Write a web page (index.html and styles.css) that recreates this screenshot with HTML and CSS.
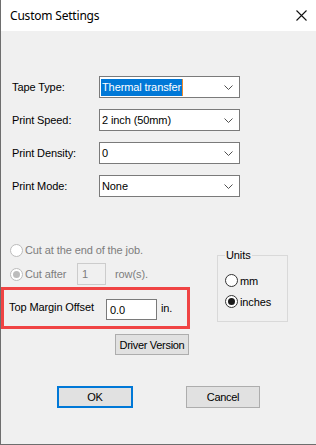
FILE: index.html
```html
<!DOCTYPE html>
<html lang="en">
<head>
    <meta charset="UTF-8">
    <meta name="viewport" content="width=device-width, initial-scale=1.0">
    <title>Custom Settings</title>
    <link rel="stylesheet" href="styles.css">
</head>
<body>
    <div class="window">
        <div class="titlebar">
            <span class="title">Custom Settings</span>
            <svg class="close" width="11" height="11" viewBox="0 0 11 11">
                <path d="M0.5 0.5 L10.5 10.5 M10.5 0.5 L0.5 10.5" stroke="#111" stroke-width="1.1" fill="none"/>
            </svg>
        </div>

        <div class="content">
            <div class="fields">
                <div class="field">
                    <span class="label">Tape Type:</span>
                    <div class="combo">
                        <span class="value selected">Thermal transfer</span>
                        <svg class="chevron" width="9" height="5" viewBox="0 0 9 5"><path d="M0.5 0.5 L4.5 4.5 L8.5 0.5" stroke="#505050" fill="none"/></svg>
                    </div>
                </div>
                <div class="field">
                    <span class="label">Print Speed:</span>
                    <div class="combo">
                        <span class="value">2 inch (50mm)</span>
                        <svg class="chevron" width="9" height="5" viewBox="0 0 9 5"><path d="M0.5 0.5 L4.5 4.5 L8.5 0.5" stroke="#505050" fill="none"/></svg>
                    </div>
                </div>
                <div class="field">
                    <span class="label">Print Density:</span>
                    <div class="combo">
                        <span class="value">0</span>
                        <svg class="chevron" width="9" height="5" viewBox="0 0 9 5"><path d="M0.5 0.5 L4.5 4.5 L8.5 0.5" stroke="#505050" fill="none"/></svg>
                    </div>
                </div>
                <div class="field">
                    <span class="label">Print Mode:</span>
                    <div class="combo">
                        <span class="value">None</span>
                        <svg class="chevron" width="9" height="5" viewBox="0 0 9 5"><path d="M0.5 0.5 L4.5 4.5 L8.5 0.5" stroke="#505050" fill="none"/></svg>
                    </div>
                </div>
            </div>

            <div class="lower">
                <div class="cut">
                    <div class="option disabled">
                        <span class="radio"></span>
                        <span>Cut at the end of the job.</span>
                    </div>
                    <div class="option disabled cut-after">
                        <span class="radio checked"></span>
                        <span class="cut-label">Cut after</span>
                        <span class="textbox small">1</span>
                        <span class="rows">row(s).</span>
                    </div>
                    <div class="margin-row">
                        <span class="margin-label">Top Margin Offset</span>
                        <span class="textbox offset">0.0</span>
                        <span class="unit">in.</span>
                    </div>
                </div>

                <fieldset class="units">
                    <legend>Units</legend>
                    <div class="option">
                        <span class="radio"></span>
                        <span>mm</span>
                    </div>
                    <div class="option">
                        <span class="radio checked"></span>
                        <span>inches</span>
                    </div>
                </fieldset>
            </div>

            <div class="version-row">
                <button class="btn version">Driver Version</button>
            </div>

            <div class="actions">
                <button class="btn ok">OK</button>
                <button class="btn cancel">Cancel</button>
            </div>
        </div>
    </div>
</body>
</html>
```

FILE: styles.css
```css
body {
    margin: 0;
    background: #ffffff;
    font-family: "Liberation Sans", Arial, sans-serif;
    font-size: 11px;
    letter-spacing: -0.1px;
    color: #000;
}
.window {
    width: 315px;
    height: 444px;
    border: 1px solid #6e6e6e;
    border-top: none;
    background: #f0f0f0;
    display: flex;
    flex-direction: column;
}
.titlebar {
    height: 31px;
    background: #ffffff;
    display: flex;
    align-items: center;
    justify-content: space-between;
    padding: 0 9px 0 9px;
}
.title {
    font-family: "Noto Sans", "Open Sans", sans-serif;
    font-size: 12px;
    letter-spacing: -0.2px;
    margin-top: -1px;
}
.close {
    margin-top: -1px;
}
.content {
    padding: 45px 0 0 9px;
}
.fields {
    display: flex;
    flex-direction: column;
    gap: 11px;
}
.field {
    display: flex;
    align-items: center;
    height: 22px;
}
.label {
    width: 87px;
    padding-left: 2px;
}
.combo {
    width: 141px;
    height: 22px;
    box-sizing: border-box;
    border: 1px solid #7a7a7a;
    background: #fff;
    display: flex;
    align-items: center;
    justify-content: space-between;
    padding: 0 6px 0 1px;
}
.value {
    padding: 2px 1px;
    line-height: 13px;
}
.selected {
    background: #0078d7;
    color: #fff;
    border-right: 1px solid #f08a2a;
}
.chevron {
    margin-top: 1px;
}
.lower {
    display: flex;
    margin-top: 43px;
}
.cut {
    width: 207px;
    display: flex;
    flex-direction: column;
}
.option {
    display: flex;
    align-items: center;
    height: 20px;
}
.disabled {
    color: #7d7d7d;
}
.radio {
    width: 11px;
    height: 11px;
    border: 1px solid #333;
    border-radius: 50%;
    background: #fff;
    margin-right: 2px;
    display: flex;
    align-items: center;
    justify-content: center;
}
.radio.checked::after {
    content: "";
    width: 7px;
    height: 7px;
    border-radius: 50%;
    background: #1a1a1a;
}
.disabled .radio {
    border-color: #bcbcbc;
}
.disabled .radio.checked::after {
    background: #bcbcbc;
}
.cut-after {
    height: 22px;
    margin-top: 3px;
}
.cut-label {
    width: 52px;
}
.textbox {
    box-sizing: border-box;
    height: 22px;
    border: 1px solid #7a7a7a;
    background: #fff;
    display: flex;
    align-items: center;
    padding-left: 4px;
}
.textbox.small {
    width: 29px;
    border-color: #cccccc;
    background: #f0f0f0;
}
.rows {
    margin-left: 9px;
}
.margin-row {
    display: flex;
    align-items: center;
    height: 36px;
    width: 178px;
    margin: 2px 0 0 -9px;
    border: 3px solid #f04444;
    padding-left: 5px;
}
.margin-label {
    width: 97px;
    margin-top: -3px;
}
.textbox.offset {
    width: 51px;
    height: 21px;
    padding-left: 3px;
    margin-top: 3px;
}
.unit {
    margin-left: 4px;
}
.units {
    width: 71px;
    box-sizing: border-box;
    height: 73px;
    margin: 9px 0 0 0;
    padding: 9px 0 0 7px;
    border: 1px solid #d9d9d9;
}
.units legend {
    padding: 0 1px;
    line-height: 12px;
}
.units .option {
    height: 21px;
}
.version-row {
    margin: 5px 0 0 105px;
}
.btn {
    font-family: "Liberation Sans", Arial, sans-serif;
    font-size: 11px;
    letter-spacing: -0.3px;
    color: #000;
    background: #e1e1e1;
    border: 1px solid #adadad;
    padding: 0;
    height: 21px;
}
.version {
    width: 74px;
}
.actions {
    display: flex;
    gap: 53px;
    margin: 31px 0 0 47px;
}
.ok {
    width: 76px;
    height: 22px;
    border: 2px solid #0078d7;
}
.cancel {
    width: 74px;
    height: 22px;
}
```
